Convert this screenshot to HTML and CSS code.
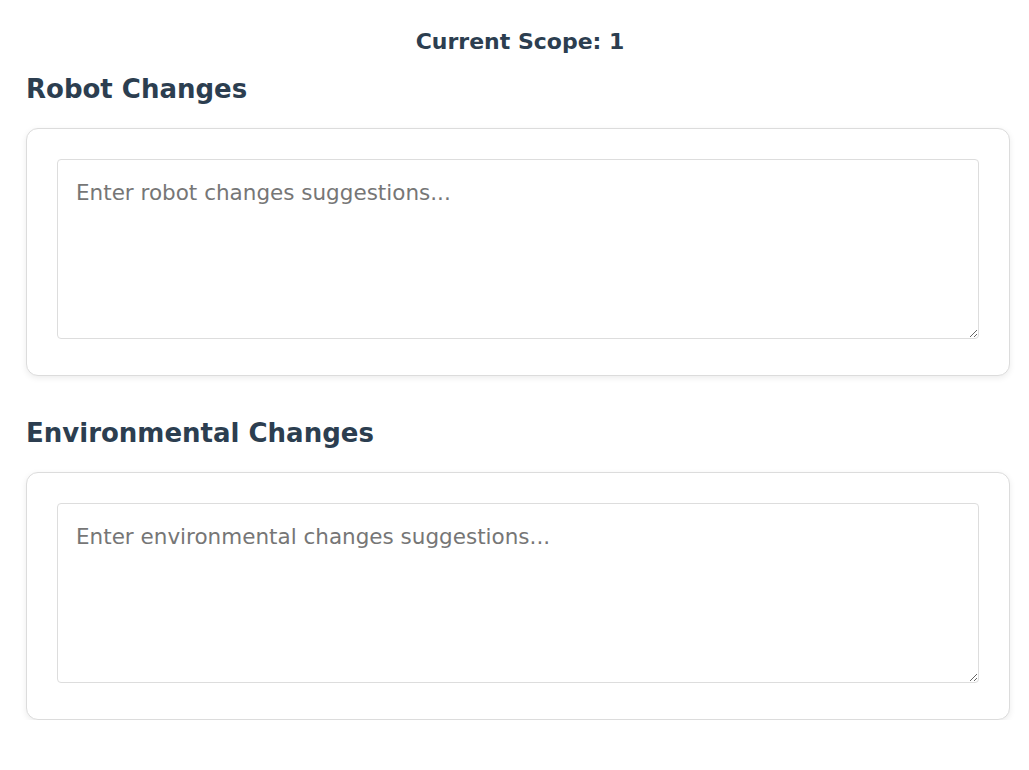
FILE: index.html
```html
<!DOCTYPE html>
<html>
<head>
<meta charset="utf-8">
<link rel="stylesheet" href="styles.css">
</head>
<body>
<div class="page">
  <div class="scope">Current Scope: 1</div>
  <section class="section">
    <h2 class="title">Robot Changes</h2>
    <div class="card">
      <textarea class="input" placeholder="Enter robot changes suggestions..."></textarea>
    </div>
  </section>
  <section class="section">
    <h2 class="title">Environmental Changes</h2>
    <div class="card">
      <textarea class="input" placeholder="Enter environmental changes suggestions..."></textarea>
    </div>
  </section>
</div>
</body>
</html>
```
FILE: styles.css
```css
* { box-sizing: border-box; }
html, body { margin: 0; background: #fff; }
body { font-family: "DejaVu Sans", "Open Sans", sans-serif; color: #2c3e50; }
.page { padding: 27px 19px 0 26px; }
.scope { text-align: center; font-size: 22px; font-weight: 700; line-height: 30px; margin-bottom: 12px; padding-left: 4px; }
.section { display: block; }
.title { margin: 0; font-size: 26px; font-weight: 700; line-height: 40px; padding: 0 0 19px 0; }
.section + .section .title { padding-top: 37px; }
.card { border: 1px solid #dcdcdc; border-radius: 12px; padding: 30px; box-shadow: 0 2px 6px rgba(0,0,0,0.08); background: #fff; }
.input { display: block; width: 100%; height: 180px; border: 1px solid #ddd; border-radius: 4px; padding: 18px; font-family: "DejaVu Sans", "Open Sans", sans-serif; font-size: 21.5px; line-height: 30px; color: #333; resize: vertical; margin-bottom: 6px; }
.input::placeholder { color: #767676; }
```
